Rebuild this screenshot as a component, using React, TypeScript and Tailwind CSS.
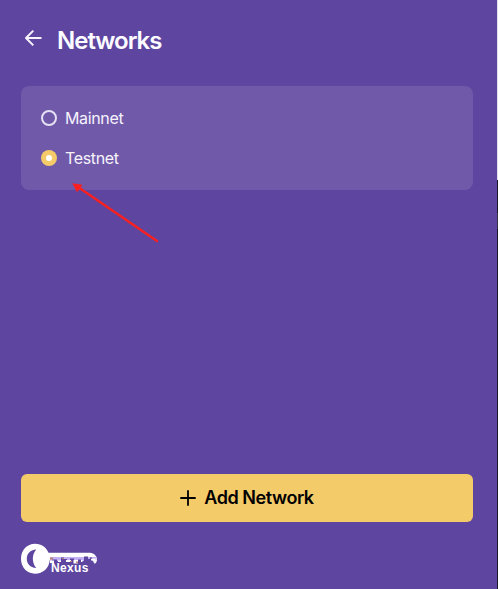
function BackIcon() {
  return (
    <svg width="18" height="18" viewBox="0 0 18 18" fill="none" stroke="#f6f3fc" strokeWidth="2" strokeLinejoin="round">
      <path d="M17.500 9H2.500M9.300 1.600L2 9L9.300 16.400" />
    </svg>
  );
}

function Radio({ label, checked }: { label: string; checked: boolean }) {
  return (
    <label className="flex h-10 items-center gap-2">
      {checked ? (
        <span className="flex size-4 items-center justify-center rounded-full bg-[#f5cb69]">
          <span className="size-1.5 rounded-full bg-white" />
        </span>
      ) : (
        <span className="size-4 rounded-full border-2 border-[#e5e0f3]" />
      )}
      <span className="text-[16px] leading-6 tracking-[-0.35px] text-[#f6f3fc]">{label}</span>
    </label>
  );
}

function Logo() {
  return (
    <svg className="block" width="78" height="34" viewBox="0 0 78 34">
      <path fill="#fff" d="M14 0.800C21 0.800 25 4.500 27.500 9.700H69C73 10 76 13 76 16.500C76 18.500 75 20 73.500 21L73 17H28.800C28 25.500 22 30.700 14 30.700C6 30.700 0 24.500 0 15.800C0 7.200 6 0.800 14 0.800Z" />
      <path fill="#5d45a0" d="M15.200 6.600C9 7 5.800 11 5.800 15.800C5.800 20.600 9 24.700 15.200 25C11 20 10.500 12 15.200 6.600Z" />
      <path fill="#c3aff3" d="M29 14H75.500V17L70 18H29Z" />
      <path fill="#5d45a0" d="M31 18V16.500H36V18H40V14.500H43V16H46V18H49V15.500H53V18H57V16.500H60V19H63V13.500H67V16H69V14.500H71V19H30V18Z" />
      <path fill="#fff" d="M29 17.500H33V20H29ZM37 17.500H40V19H37ZM45 17H50V19H45ZM52.500 17H57V20.500H52.500ZM60 17H61.500V19H60ZM70 15.800L75 15.500L73 20.500L72 17.500H70Z" />
      <path fill="#bd8574" d="M29 14.500H32V16.500H29ZM41 15H43V16H41ZM55 18.500H57V20H55ZM49 18H51V19H49Z" />
      <text x="30" y="29.100" fill="#fff" fontFamily="Liberation Sans, sans-serif" fontWeight="700" fontSize="12" textLength="37.500">Nexus</text>
    </svg>
  );
}

export default function App() {
  return (
    <div className="relative flex h-[589px] w-[498px] bg-[#5d45a0] font-['Inter',sans-serif]">
      <main className="flex min-w-0 flex-1 flex-col pl-[21px] pr-6">
        <header className="flex h-[86px] items-start gap-[15px] pl-[3px]">
          <span className="mt-[29px]"><BackIcon /></span>
          <h1 className="mt-[25px] text-[24px] font-semibold leading-8 tracking-[-1px] text-[#fcfbff]">Networks</h1>
        </header>
        <section className="h-[104px] rounded-lg bg-[#7059a9] px-5 py-3">
          <Radio label="Mainnet" checked={false} />
          <Radio label="Testnet" checked />
        </section>
        <button className="mt-auto flex h-12 shrink-0 items-center justify-center gap-2 rounded-md bg-[#f4cb69] text-black">
          <svg width="16" height="16" viewBox="0 0 16 16" stroke="currentColor" strokeWidth="1.8">
            <path d="M8 0.300V15.700M0.300 8H15.700" />
          </svg>
          <span className="text-[18px] font-semibold leading-6 tracking-[-0.45px]">Add Network</span>
        </button>
        <footer className="h-[67px] shrink-0 pt-[21px]"><Logo /></footer>
      </main>
      <aside className="flex w-px flex-col bg-[#17162a]">
        <div className="h-[180px] bg-[#e3deef]" />
        <div className="mt-[33px] h-4 bg-[#35334b]" />
      </aside>
      <svg className="pointer-events-none absolute left-[70px] top-[180px]" width="92" height="65" viewBox="0 0 92 65" fill="none">
        <path d="M8 7L87 61" stroke="#fa2020" strokeWidth="2.400" strokeLinecap="round" />
        <path d="M2.300 3.200L12.300 4.800L10.500 8L7 12.200Z" fill="#fa2020" />
      </svg>
    </div>
  );
}
